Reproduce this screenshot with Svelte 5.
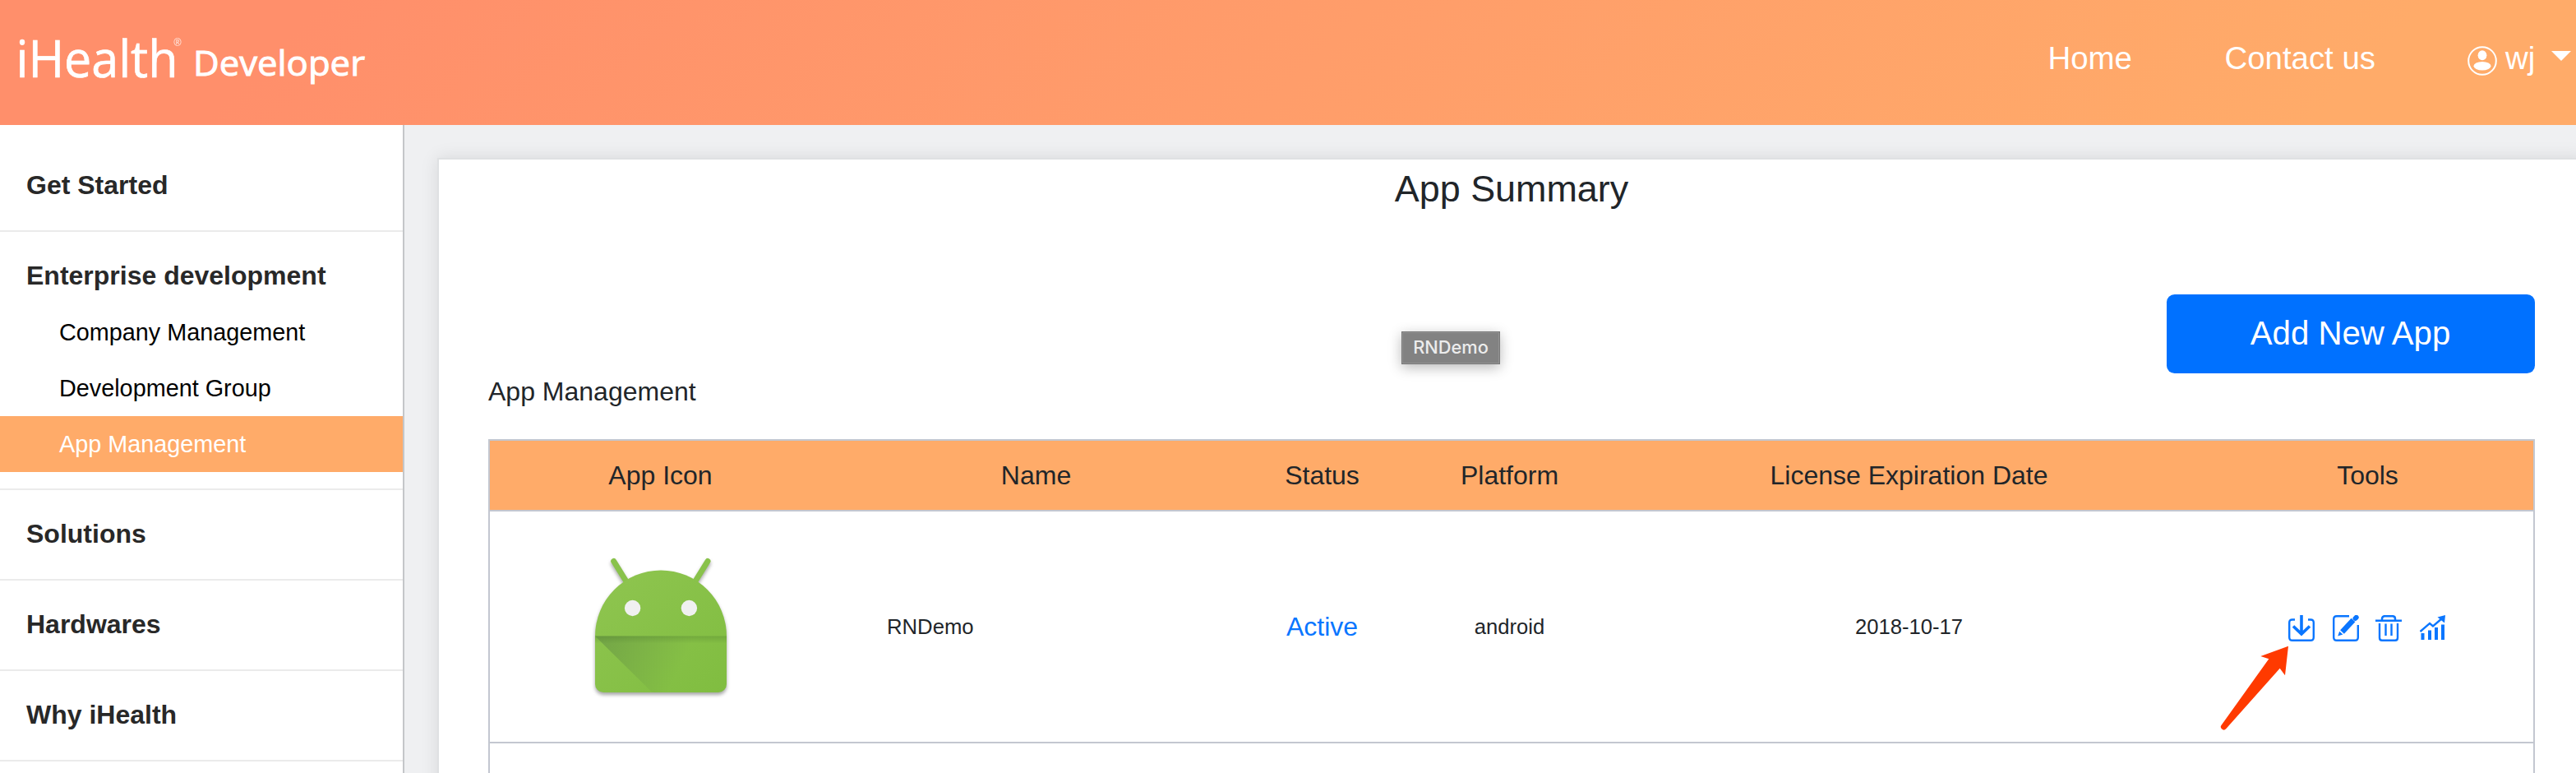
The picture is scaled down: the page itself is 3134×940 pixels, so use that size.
<script>
  const before = [{ label: 'Get Started' }];
  const items = ['Company Management', 'Development Group', 'App Management'];
  const after = ['Solutions', 'Hardwares', 'Why iHealth'];
  const columns = ['App Icon', 'Name', 'Status', 'Platform', 'License Expiration Date', 'Tools'];
</script>

<div class="page">
  <header>
    <svg class="logo" width="460" height="152" viewBox="0 0 460 152" fill="#fff">
      <text x="19.500" y="94" font-size="63"><tspan textLength="197" lengthAdjust="spacingAndGlyphs">iHealth</tspan><tspan class="reg" x="211" y="56" font-size="12">®</tspan></text>
      <text class="dev" x="235" y="92" font-size="42" textLength="209" lengthAdjust="spacingAndGlyphs">Developer</text>
    </svg>
    <nav>
      <a class="home">Home</a>
      <a class="contact">Contact us</a>
      <span class="user">
        <svg width="36" height="36" viewBox="0 0 36 36">
          <circle cx="18" cy="18" r="16.8" fill="none" stroke="#fff" stroke-width="2" />
          <ellipse cx="18" cy="11.2" rx="5.4" ry="6" fill="#fff" />
          <ellipse cx="18" cy="24.3" rx="10.5" ry="5.2" fill="#fff" />
        </svg>
        <span class="uname">wj</span>
        <i class="caret"></i>
      </span>
    </nav>
  </header>

  <div class="body">
    <aside>
      {#each before as s}
        <section><h4>{s.label}</h4></section>
      {/each}
      <section class="open">
        <h4>Enterprise development</h4>
        <ul>
          {#each items as item, i}
            <li class:active={i === 2}>{item}</li>
          {/each}
        </ul>
      </section>
      {#each after as s}
        <section><h4>{s}</h4></section>
      {/each}
    </aside>

    <main>
      <div class="card">
        <h1>App Summary</h1>
        <div class="actions"><button>Add New App</button></div>
        <h2>App Management</h2>
        <div class="table">
          <div class="row head">
            {#each columns as c}<div>{c}</div>{/each}
          </div>
          <div class="row">
            <div class="icon">
              <svg class="droid" width="192" height="192" viewBox="708 665.500 192 192">
                <defs>
                  <linearGradient id="g" x1="0" y1="0" x2="1" y2="1">
                    <stop offset="0" stop-color="#8fc550" />
                    <stop offset="1" stop-color="#80bd40" />
                  </linearGradient>
                  <linearGradient id="sh" gradientUnits="userSpaceOnUse" x1="735" y1="773" x2="825" y2="815">
                    <stop offset="0" stop-color="#558040" stop-opacity=".42" />
                    <stop offset="1" stop-color="#558040" stop-opacity="0" />
                  </linearGradient>
                  <linearGradient id="edge" x1="0" y1="0" x2="0" y2="1">
                    <stop offset="0" stop-color="#4c7a2c" stop-opacity=".32" />
                    <stop offset="1" stop-color="#4c7a2c" stop-opacity="0" />
                  </linearGradient>
                </defs>
                <g class="shape">
                  <path d="M746.7 682l15.5 25M861 682l-15.5 25" stroke="#89c24b" stroke-width="7" stroke-linecap="round" />
                  <path d="M724 773a80 80 0 0 1 160 0v58.500a10 10 0 0 1-10 10H734a10 10 0 0 1-10-10z" fill="url(#g)" />
                </g>
                <path d="M724 773h160v58.500a10 10 0 0 1-10 10H793.500z" fill="url(#sh)" />
                <rect x="724" y="773" width="160" height="9" fill="url(#edge)" />
                <circle cx="769.6" cy="739" r="9.700" fill="#f0f0f0" />
                <circle cx="838.4" cy="739" r="9.700" fill="#f0f0f0" />
              </svg>
            </div>
            <div class="name">RNDemo</div>
            <div class="status">Active</div>
            <div class="small">android</div>
            <div class="small">2018-10-17</div>
            <div class="tools">
              <svg width="32" height="32" viewBox="0 0 32 32" fill="none" stroke="#0a76ff">
                <path d="M8 5.500H5Q1.200 5.500 1.200 9v18Q1.200 30.800 5 30.800h22q3.800 0 3.800-3.800V9q0-3.500-3.800-3.500H24" stroke-width="2.400" />
                <path d="M16 0v23M6 13.500l10 9.500 10-9.500" stroke-width="3.600" />
              </svg>
              <svg width="32" height="32" viewBox="0 0 32 32" fill="none" stroke="#0a76ff">
                <path d="M20 1.200H5Q1.200 1.200 1.200 5v22Q1.200 30.800 5 30.800h22q3.800 0 3.800-3.800V12" stroke-width="2.400" />
                <path d="M11.500 20.500L25 6" stroke-width="6.500" />
                <path d="M27.500 4l1.200-1.200" stroke-width="6" stroke-linecap="round" />
                <path d="M8.200 19.800l4.200 3.700-6.200 2z" fill="#0a76ff" stroke="none" />
              </svg>
              <svg width="32" height="32" viewBox="0 0 32 32" fill="none" stroke="#0a76ff">
                <path d="M0 6.700h32M8 6.500V4.500q0-3.300 3.300-3.300h9.400q3.300 0 3.300 3.300v2" stroke-width="2.500" />
                <path d="M5 10v17.500Q5 30.800 8 30.800h16q3 0 3-3.300V10M12.500 10.500v14.500M19.500 10.500v14.500" stroke-width="2.400" />
              </svg>
              <svg width="32" height="32" viewBox="0 0 32 32" fill="#0a76ff">
                <path d="M1.500 22h4v8h-4zM10 18.500h4V30h-4zM18 15h4v15h-4zM26 11.500h4V30h-4z" />
                <path d="M.5 20L12 10l4 3.500L27 4" fill="none" stroke="#0a76ff" stroke-width="2.400" />
                <path d="M31 0l-1 9.500L21.500 2.500z" />
              </svg>
            </div>
          </div>
          <div class="row next"><div></div></div>
        </div>
      </div>
    </main>
  </div>

  <div class="tip">RNDemo</div>
  <svg class="arrow" width="90" height="110" viewBox="0 0 90 110">
    <path d="M84 5.700L50.300 18l10 3.300L2.800 101.500a3.500 3.500 0 0 0 5.400 4.700L73.700 32.700l6.300 8.600z" fill="#ff3a00" />
  </svg>
</div>

<style>
  :global(body) { margin: 0; }
  .page {
    position: relative; width: 3134px; height: 940px; overflow: hidden;
    display: flex; flex-direction: column; box-sizing: border-box;
    background: #eff0f2; color: #212529;
    font-family: "Liberation Sans", Arial, sans-serif; font-size: 32px;
  }
  header {
    flex: 0 0 152px; display: flex; justify-content: space-between;
    background: linear-gradient(135deg, #ff8f6b 0%, #ff8f6b 12%, #ffab69 90%, #ffab69 100%);
    color: #fff; font-size: 38.400px;
  }
  .logo text { font-family: "Open Sans", "Noto Sans", sans-serif; stroke: #fff; stroke-width: .7px; }
  .logo .reg { stroke-width: 0; opacity: .8; }
  .logo .dev { stroke-width: 1px; }
  nav { display: flex; align-items: flex-start; padding: 48px 6px 0 0; line-height: 46px; white-space: nowrap; }
  .home { margin-right: 112.600px; }
  .contact { margin-right: 112px; }
  .user { display: flex; }
  .user svg { margin-top: 8px; }
  .uname { margin-left: 10px; width: 56px; }
  .caret { margin-top: 14px; width: 0; height: 0; border: 12px solid transparent; border-top-color: #fff; border-bottom: 0; }

  .body { flex: 1; display: flex; min-height: 0; }
  aside { flex: 0 0 490px; padding-top: 20px; background: #fff; border-right: 2px solid #c4c6c9; }
  section { border-bottom: 2px solid #ebebeb; }
  h4 { margin: 0; padding: 0 32px; height: 108px; line-height: 106px; font-size: 32px; color: #282828; }
  .open h4 { height: 88px; }
  ul { list-style: none; margin: 0; padding: 0 0 20px; }
  li { height: 68px; line-height: 68px; padding-left: 72px; font-size: 28.800px; color: #000; }
  li.active { background: #ffab69; color: #fff; }

  main { flex: 1; padding: 40px 0 0 40px; }
  .card {
    box-sizing: border-box; width: 2614px; height: 900px; padding: 0 60px;
    background: #fff; border: 2px solid #dfe1e3; box-shadow: 0 0 20px rgba(0, 0, 0, .1);
  }
  h1 { margin: 0; padding-top: 10px; height: 154px; line-height: 52px; font-size: 44.900px; font-weight: 400; text-align: center; }
  .actions { display: flex; justify-content: flex-end; }
  button {
    width: 448px; height: 96px; border: 0; border-radius: 9.600px; padding: 0 1px 0 0;
    background: #0071ff; color: #fff; font: 40.200px "Liberation Sans", Arial, sans-serif;
  }
  h2 { margin: 0; height: 80px; line-height: 45px; font-size: 32px; font-weight: 400; }
  .table { border: 2px solid #c3c7d0; width: 2486px; }
  .row {
    display: grid; grid-template-columns: 416px 498px 198px 258px 714px 402px;
    height: 280px; align-items: center; text-align: center; border-bottom: 2px solid #c3c7d0;
  }
  .row > div { padding: 0 1px 1px 0; line-height: 36px; }
  .head { height: 84px; background: #ffab69; }
  .row > .icon { padding: 0; }
  .row > .name { padding-left: 67px; text-align: left; font-size: 25.700px; }
  .small { font-size: 25.600px; }
  .status { color: #0a76ff; }
  .row > .tools { display: flex; justify-content: center; gap: 22px; padding: 4px 2px 0 0; }
  .tools svg:nth-child(3) { margin-left: -2px; }
  .droid { display: block; margin: 0 auto; }
  .shape { filter: drop-shadow(0 3px 2px rgba(0, 0, 0, .35)); }

  .tip {
    position: absolute; left: 1705px; top: 403px; width: 120px; height: 40px; box-sizing: border-box;
    border: 1px solid #777; box-shadow: inset 0 0 0 1px #929292, 0 4px 16px rgba(0, 0, 0, .28);
    background: #828282; color: #ececec; text-align: center;
    font: 500 21.800px/37px Inter, Roboto, sans-serif;
  }
  .arrow { position: absolute; left: 2700px; top: 780px; }
</style>
